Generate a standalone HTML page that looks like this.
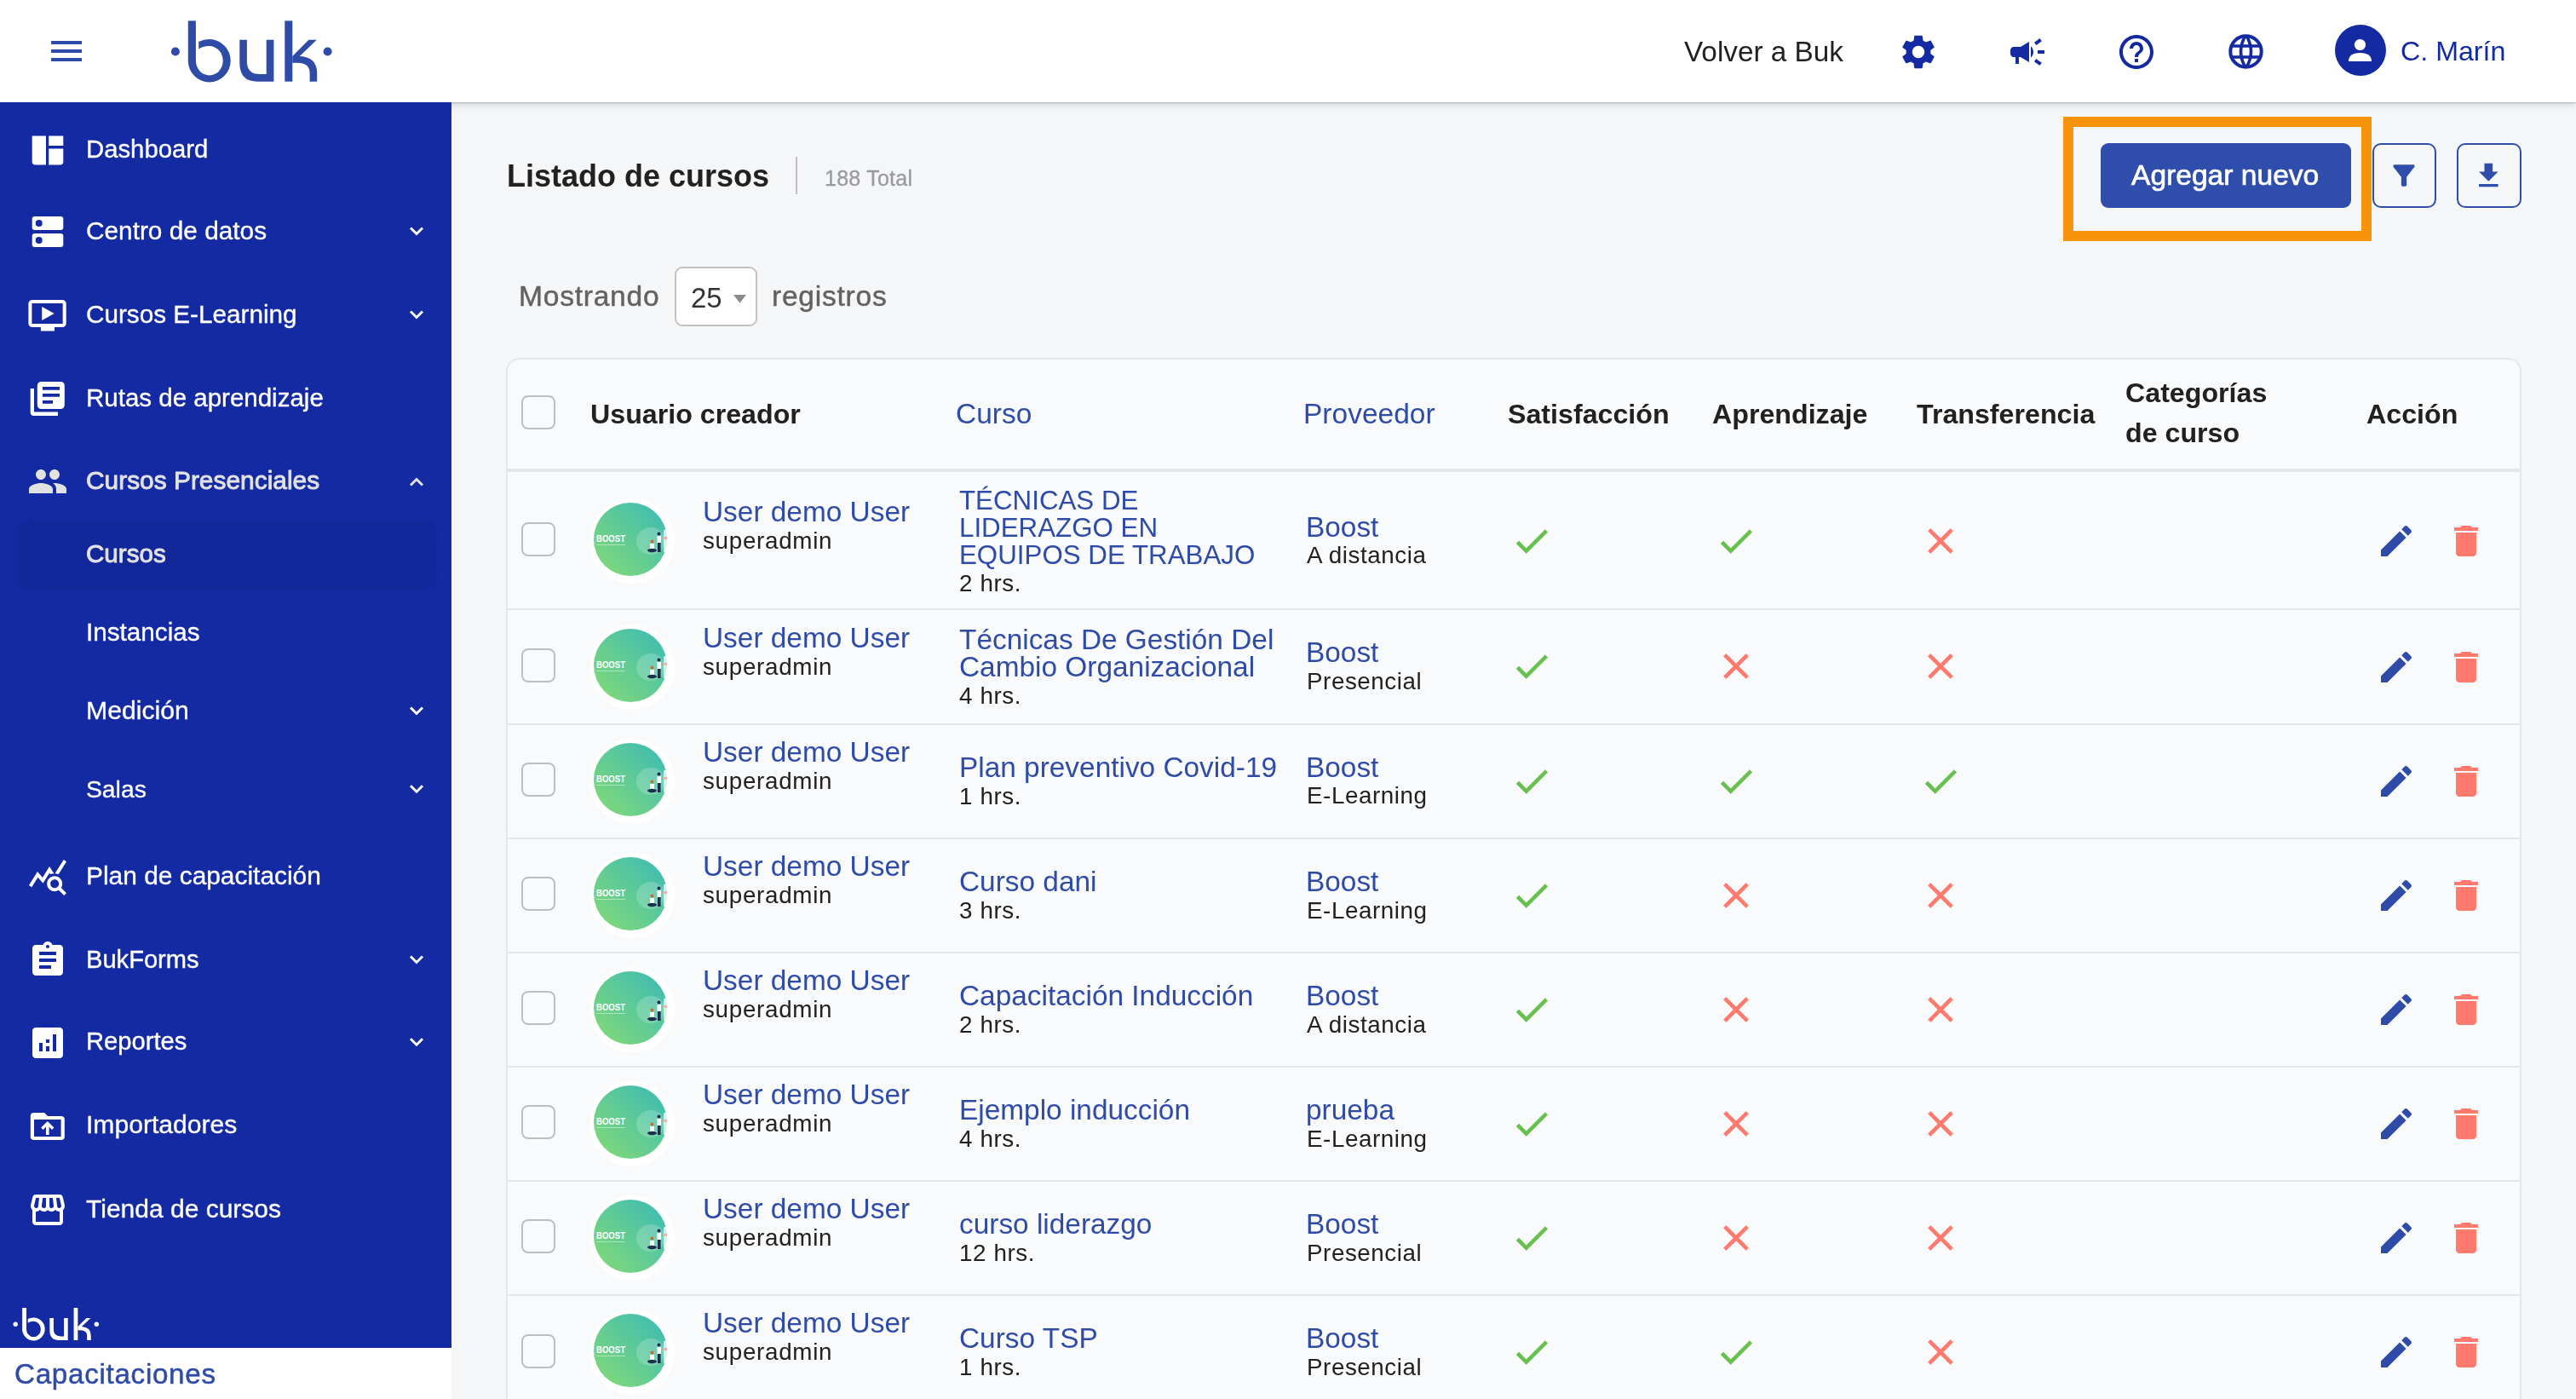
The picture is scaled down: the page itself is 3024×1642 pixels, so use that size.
<!DOCTYPE html><html><head><meta charset="utf-8"><title>Listado de cursos</title><style>
html,body{margin:0;padding:0;}
body{width:3024px;height:1642px;position:relative;overflow:hidden;background:#f5f6f8;font-family:"Liberation Sans",sans-serif;}
.t{position:absolute;white-space:nowrap;will-change:transform;}
.ic{position:absolute;overflow:visible;}
.abs{position:absolute;}
</style></head><body>
<div class="abs" style="left:0;top:0;width:3024px;height:120px;background:#fff;box-shadow:0 1px 2px rgba(0,0,0,0.22),0 3px 10px rgba(0,0,0,0.13);z-index:2"></div>
<div class="abs" style="left:60px;top:48px;width:36px;height:3.6px;background:#2f4ba8;z-index:3"></div>
<div class="abs" style="left:60px;top:58px;width:36px;height:3.6px;background:#2f4ba8;z-index:3"></div>
<div class="abs" style="left:60px;top:68px;width:36px;height:3.6px;background:#2f4ba8;z-index:3"></div>
<svg class="ic" style="left:0.00px;top:0.00px;z-index:3" width="3024" height="120" viewBox="0 0 3024 120"><g fill="#2f4ba8"><circle cx="205.9" cy="60.5" r="5.05"/><circle cx="384.6" cy="60.5" r="5.05"/><rect x="220.8" y="24.4" width="9.1" height="48.5"/><path d="M233.2 48.9 Q239 46 245.75 46 A24.95 25.25 0 0 1 270.7 71.25 A24.95 25.25 0 0 1 245.75 96.5 A24.95 25.25 0 0 1 220.8 71.25 L229.9 71.25 A15.9 17.15 0 0 0 245.8 88.4 A15.9 17.15 0 0 0 261.7 71.25 A15.9 17.15 0 0 0 245.8 54.1 Q238 54.1 233.2 57.6 Z"/><path d="M281.3 46.8 H289.9 V72 Q289.9 87.1 305 87.1 H312.7 V46.8 H321.4 V95.7 H302 Q281.3 95.7 281.3 74 Z"/><rect x="334.3" y="24.4" width="9" height="71.3"/><path d="M343.3 65.9 H351.8 L371.8 46.8 H362.4 Z"/><path d="M343.3 65.9 H352 Q372.2 67 372.2 86 V95.7 H363.6 V86 Q363.6 73.7 349 73.7 H343.3 Z"/></g></svg>
<div style="position:absolute;left:0;top:0;z-index:4">
<div class="t" style="left:1977.00px;top:44.31px;font-size:33.3px;line-height:33.3px;color:#212121;font-weight:400;">Volver a Buk</div>
<svg class="ic" style="left:2228.00px;top:36.75px;" width="48" height="48" viewBox="0 0 24 24"><path d="M19.14 12.94c.04-.3.06-.61.06-.94 0-.32-.02-.64-.07-.94l2.03-1.58c.18-.14.23-.41.12-.61l-1.92-3.32c-.12-.22-.37-.29-.59-.22l-2.39.96c-.5-.38-1.03-.7-1.62-.94l-.36-2.54c-.04-.24-.24-.41-.48-.41h-3.84c-.24 0-.43.17-.47.41l-.36 2.54c-.59.24-1.13.57-1.62.94l-2.39-.96c-.22-.08-.47 0-.59.22L2.74 8.87c-.12.21-.08.47.12.61l2.03 1.58c-.05.3-.09.63-.09.94s.02.64.07.94l-2.03 1.58c-.18.14-.23.41-.12.61l1.92 3.32c.12.22.37.29.59.22l2.39-.96c.5.38 1.030.7 1.62.94l.36 2.54c.05.24.24.41.48.41h3.84c.24 0 .44-.17.47-.41l.36-2.54c.59-.24 1.13-.56 1.62-.94l2.39.96c.22.08.47 0 .59-.22l1.92-3.32c.12-.22.07-.47-.12-.61l-2.01-1.58zM12 15.6c-1.98 0-3.6-1.62-3.6-3.6s1.62-3.6 3.6-3.6 3.6 1.62 3.6 3.6-1.62 3.6-3.6 3.6z" fill="#132aa3" /></svg>
<svg class="ic" style="left:2356.40px;top:37.00px;" width="48" height="48" viewBox="0 0 24 24"><path d="M18 11v2h4v-2h-4zm-2 6.61c.96.71 2.21 1.65 3.2 2.39.4-.53.8-1.07 1.2-1.6-.99-.74-2.24-1.68-3.2-2.4-.4.54-.8 1.08-1.2 1.61zM20.4 5.6c-.4-.53-.8-1.07-1.2-1.6-.99.74-2.24 1.68-3.2 2.4.4.53.8 1.07 1.2 1.6.96-.72 2.21-1.65 3.2-2.4zM4 9c-1.1 0-2 .9-2 2v2c0 1.1.9 2 2 2h1v4h2v-4h1l5 3V6L8 9H4zm11.5 3c0-1.33-.58-2.530-1.5-3.35v6.69c.92-.81 1.5-2.01 1.5-3.34z" fill="#132aa3" /></svg>
<svg class="ic" style="left:2484.25px;top:36.75px;" width="48" height="48" viewBox="0 0 24 24"><path d="M11 18h2v-2h-2v2zm1-16C6.48 2 2 6.48 2 12s4.48 10 10 10 10-4.48 10-10S17.52 2 12 2zm0 18c-4.41 0-8-3.59-8-8s3.59-8 8-8 8 3.59 8 8-3.59 8-8 8zm0-14c-2.21 0-4 1.79-4 4h2c0-1.1.9-2 2-2s2 .9 2 2c0 2-3 1.75-3 5h2c0-2.25 3-2.5 3-5 0-2.21-1.79-4-4-4z" fill="#132aa3" /></svg>
<svg class="ic" style="left:2616.00px;top:39.50px;" width="41" height="41" viewBox="0 0 41 41"><g fill="none" stroke="#132aa3" stroke-width="4"><circle cx="20.5" cy="20.5" r="18.2"/><clipPath id="gl"><circle cx="20.5" cy="20.5" r="18"/></clipPath><g clip-path="url(#gl)" stroke-width="3.6"><path d="M20.5 1 Q8.5 20.5 20.5 40 Q32.5 20.5 20.5 1"/><path d="M1 14 H40 M1 27 H40"/></g></g></svg>
<svg class="ic" style="left:2741.20px;top:28.80px;" width="60" height="60" viewBox="0 0 60 60"><circle cx="30" cy="30" r="30" fill="#132aa3"/><circle cx="29.5" cy="23.5" r="6.6" fill="#fff"/><path d="M16 43 Q16 33 29.5 33 Q43 33 43 43 Z" fill="#fff"/></svg>
<div class="t" style="left:2818.40px;top:43.94px;font-size:32.2px;line-height:32.2px;color:#132aa3;font-weight:400;">C. Marín</div>
</div>
<div class="abs" style="left:0;top:120px;width:530px;height:1462px;background:#132aa3;z-index:3"></div>
<div class="abs" style="left:0;top:1582px;width:530px;height:60px;background:#fff;z-index:3"></div>
<div class="abs" style="left:20px;top:610px;width:493.25px;height:83px;border-radius:16px;background:#11279a;z-index:3"></div>
<div style="position:absolute;left:0;top:0;z-index:4">
<div class="t" style="left:100.75px;top:159.90px;font-size:29.3px;line-height:29.3px;color:#ffffff;font-weight:400;-webkit-text-stroke:0.35px #ffffff;">Dashboard</div>
<div class="t" style="left:100.75px;top:255.97px;font-size:29.8px;line-height:29.8px;color:#ffffff;font-weight:400;-webkit-text-stroke:0.35px #ffffff;">Centro de datos</div>
<svg class="ic" style="left:0.00px;top:0.00px;" width="530" height="1642" viewBox="0 0 530 1642"><path d="M482 267.5 L489 274.5 L496 267.5" fill="none" stroke="#fff" stroke-width="3"/></svg>
<div class="t" style="left:100.75px;top:354.06px;font-size:29.7px;line-height:29.7px;color:#ffffff;font-weight:400;-webkit-text-stroke:0.35px #ffffff;">Cursos E-Learning</div>
<svg class="ic" style="left:0.00px;top:0.00px;" width="530" height="1642" viewBox="0 0 530 1642"><path d="M482 365.5 L489 372.5 L496 365.5" fill="none" stroke="#fff" stroke-width="3"/></svg>
<div class="t" style="left:100.75px;top:452.23px;font-size:29.5px;line-height:29.5px;color:#ffffff;font-weight:400;-webkit-text-stroke:0.35px #ffffff;">Rutas de aprendizaje</div>
<div class="t" style="left:100.75px;top:548.89px;font-size:29.9px;line-height:29.9px;color:#e2e2e2;font-weight:400;-webkit-text-stroke:0.9px #e2e2e2;">Cursos Presenciales</div>
<svg class="ic" style="left:0.00px;top:0.00px;" width="530" height="1642" viewBox="0 0 530 1642"><path d="M482 569.5 L489 562.5 L496 569.5" fill="none" stroke="#e2e2e2" stroke-width="3"/></svg>
<div class="t" style="left:100.75px;top:635.39px;font-size:29.6px;line-height:29.6px;color:#e2e2e2;font-weight:400;-webkit-text-stroke:0.9px #e2e2e2;">Cursos</div>
<div class="t" style="left:100.75px;top:726.56px;font-size:29.7px;line-height:29.7px;color:#ffffff;font-weight:400;-webkit-text-stroke:0.35px #ffffff;">Instancias</div>
<div class="t" style="left:100.75px;top:818.64px;font-size:30.2px;line-height:30.2px;color:#ffffff;font-weight:400;-webkit-text-stroke:0.35px #ffffff;">Medición</div>
<svg class="ic" style="left:0.00px;top:0.00px;" width="530" height="1642" viewBox="0 0 530 1642"><path d="M482 830.5 L489 837.5 L496 830.5" fill="none" stroke="#fff" stroke-width="3"/></svg>
<div class="t" style="left:100.75px;top:911.99px;font-size:28.3px;line-height:28.3px;color:#ffffff;font-weight:400;-webkit-text-stroke:0.35px #ffffff;">Salas</div>
<svg class="ic" style="left:0.00px;top:0.00px;" width="530" height="1642" viewBox="0 0 530 1642"><path d="M482 922.25 L489 929.25 L496 922.25" fill="none" stroke="#fff" stroke-width="3"/></svg>
<div class="t" style="left:100.75px;top:1012.64px;font-size:29.9px;line-height:29.9px;color:#ffffff;font-weight:400;-webkit-text-stroke:0.35px #ffffff;">Plan de capacitación</div>
<div class="t" style="left:100.75px;top:1111.57px;font-size:29.1px;line-height:29.1px;color:#ffffff;font-weight:400;-webkit-text-stroke:0.35px #ffffff;">BukForms</div>
<svg class="ic" style="left:0.00px;top:0.00px;" width="530" height="1642" viewBox="0 0 530 1642"><path d="M482 1122.5 L489 1129.5 L496 1122.5" fill="none" stroke="#fff" stroke-width="3"/></svg>
<div class="t" style="left:100.75px;top:1208.23px;font-size:29.2px;line-height:29.2px;color:#ffffff;font-weight:400;-webkit-text-stroke:0.35px #ffffff;">Reportes</div>
<svg class="ic" style="left:0.00px;top:0.00px;" width="530" height="1642" viewBox="0 0 530 1642"><path d="M482 1219.25 L489 1226.25 L496 1219.25" fill="none" stroke="#fff" stroke-width="3"/></svg>
<div class="t" style="left:100.75px;top:1304.97px;font-size:30.1px;line-height:30.1px;color:#ffffff;font-weight:400;-webkit-text-stroke:0.35px #ffffff;">Importadores</div>
<div class="t" style="left:100.75px;top:1403.81px;font-size:30.0px;line-height:30.0px;color:#ffffff;font-weight:400;-webkit-text-stroke:0.35px #ffffff;">Tienda de cursos</div>
<svg class="ic" style="left:0.00px;top:0.00px;" width="530" height="1642" viewBox="0 0 530 1642"><g fill="#ffffff"><path d="M37.7 159.5 H54 V193.4 H41.7 Q37.7 193.4 37.7 189.4 Z"/><rect x="57.2" y="159.5" width="17.1" height="11.5"/><path d="M57.2 174.4 H74.3 V189.4 Q74.3 193.4 70.3 193.4 H57.2 Z"/><path fill-rule="evenodd" d="M40.7 254 H71.3 Q74.3 254 74.3 257 V267 Q74.3 270 71.3 270 H40.7 Q37.7 270 37.7 267 V257 Q37.7 254 40.7 254 Z M45.7 258 A4 4 0 1 0 45.7 266 A4 4 0 1 0 45.7 258 Z"/><path fill-rule="evenodd" d="M40.7 274 H71.3 Q74.3 274 74.3 277 V287 Q74.3 290 71.3 290 H40.7 Q37.7 290 37.7 287 V277 Q37.7 274 40.7 274 Z M45.7 278 A4 4 0 1 0 45.7 286 A4 4 0 1 0 45.7 278 Z"/><rect x="35.4" y="354" width="40.3" height="28" rx="2.5" fill="none" stroke="#ffffff" stroke-width="4"/><rect x="47.9" y="384" width="16.1" height="4.5"/><path d="M49.2 360 L63.7 368 L49.2 376 Z"/><path fill-rule="evenodd" d="M48.8 448 H70.8 Q75.8 448 75.8 453 V475 Q75.8 480 70.8 480 H48.8 Q43.8 480 43.8 475 V453 Q43.8 448 48.8 448 Z M50 454 V457.7 H70 V454 Z M50 462 V465.7 H70 V462 Z M50 470 V473.8 H62 V470 Z"/><path d="M35.7 456 H40 V483.4 H68 V488 H39.7 Q35.7 488 35.7 484 Z"/></g></svg>
<svg class="ic" style="left:31.75px;top:541.00px;" width="48" height="48" viewBox="0 0 24 24"><path d="M16 11c1.66 0 2.99-1.34 2.99-3S17.66 5 16 5c-1.66 0-3 1.34-3 3s1.34 3 3 3zm-8 0c1.66 0 2.99-1.34 2.99-3S9.66 5 8 5C6.34 5 5 6.34 5 8s1.34 3 3 3zm0 2c-2.33 0-7 1.17-7 3.5V19h14v-2.5c0-2.33-4.67-3.5-7-3.5zm8 0c-.29 0-.62.02-.97.05 1.16.84 1.97 1.97 1.97 3.45V19h6v-2.5c0-2.33-4.67-3.5-7-3.5z" fill="#e2e2e2" /></svg>
<svg class="ic" style="left:32.00px;top:1005.00px;" width="48" height="48" viewBox="0 0 24 24"><path d="M19.88 18.47c.44-.7.7-1.51.7-2.39 0-2.49-2.01-4.5-4.5-4.5s-4.5 2.01-4.5 4.5 2.01 4.5 4.49 4.5c.88 0 1.7-.26 2.39-.7L21.58 23 23 21.58l-3.12-3.11zm-3.8.11c-1.38 0-2.5-1.12-2.5-2.5s1.12-2.5 2.5-2.5 2.5 1.12 2.5 2.5-1.12 2.5-2.5 2.5zm-.36-8.5c-.74.02-1.45.18-2.1.45l-.55-.83-3.8 6.18-3.01-3.52-3.63 5.81L1 17l5-8 3 3.5L13 6l2.72 4.08zm2.59.5c-.64-.28-1.33-.45-2.05-.49L21.38 2 23 3.18l-4.69 7.4z" fill="#ffffff" /></svg>
<svg class="ic" style="left:31.70px;top:1102.90px;" width="48" height="48" viewBox="0 0 24 24"><path d="M19 3h-4.18C14.4 1.84 13.3 1 12 1c-1.3 0-2.4.84-2.82 2H5c-1.1 0-2 .9-2 2v14c0 1.1.9 2 2 2h14c1.1 0 2-.9 2-2V5c0-1.1-.9-2-2-2zm-7 0c.55 0 1 .45 1 1s-.45 1-1 1-1-.45-1-1 .45-1 1-1zm2 14H7v-2h7v2zm3-4H7v-2h10v2zm0-4H7V7h10v2z" fill="#ffffff" /></svg>
<svg class="ic" style="left:31.70px;top:1199.90px;" width="48" height="48" viewBox="0 0 24 24"><path d="M19 3H5c-1.1 0-2 .9-2 2v14c0 1.1.9 2 2 2h14c1.1 0 2-.9 2-2V5c0-1.1-.9-2-2-2zM9 17H7v-5h2v5zm4 0h-2v-3h2v3zm0-5h-2v-2h2v2zm4 5h-2V7h2v10z" fill="#ffffff" /></svg>
<svg class="ic" style="left:0.00px;top:0.00px;" width="530" height="1642" viewBox="0 0 530 1642"><g fill="#ffffff"><path fill-rule="evenodd" d="M39.8 1306 H52 L56 1310 H71.8 Q75.8 1310 75.8 1314 V1334 Q75.8 1338 71.8 1338 H39.8 Q35.8 1338 35.8 1334 V1310 Q35.8 1306 39.8 1306 Z M40 1314 V1334 H71.6 V1314 Z"/><path d="M55.8 1316 L63.4 1323.6 L61 1326 L57.6 1322.6 V1332 H54 V1322.6 L50.6 1326 L48.2 1323.6 Z"/></g></svg>
<svg class="ic" style="left:31.90px;top:1396.00px;" width="48" height="48" viewBox="0 0 24 24"><path d="M21.9 8.89l-1.05-4.37c-.22-.9-1-1.52-1.91-1.52H5.05c-.9 0-1.69.63-1.9 1.52L2.1 8.89c-.24 1.02-.02 2.06.62 2.88.08.11.19.19.28.29V19c0 1.1.9 2 2 2h14c1.1 0 2-.9 2-2v-6.94c.09-.09.2-.18.28-.28.64-.82.87-1.870.62-2.89zm-2.99-3.9l1.05 4.37c.1.42.01.84-.25 1.17-.14.18-.44.47-.94.47-.61 0-1.14-.49-1.21-1.14L16.98 5l1.93-.01zM13 5h1.96l.54 4.52c.05.39-.07.78-.33 1.07-.22.26-.54.41-.95.41-.67 0-1.22-.59-1.22-1.31V5zM8.49 9.52L9.04 5H11v4.69c0 .72-.55 1.31-1.29 1.31-.34 0-.65-.15-.89-.41-.25-.29-.37-.68-.33-1.07zm-4.45-.16L5.05 5h1.97l-.58 4.86c-.08.65-.6 1.14-1.21 1.14-.49 0-.8-.29-.93-.47-.27-.32-.36-.75-.26-1.17zM5 19v-6.03c.08.01.15.03.23.03.87 0 1.66-.36 2.24-.95.6.6 1.4.95 2.31.95.87 0 1.65-.36 2.230-.93.59.57 1.39.93 2.29.93.84 0 1.64-.35 2.24-.95.58.59 1.37.95 2.24.95.08 0 .15-.02.23-.03V19H5z" fill="#ffffff" /></svg>
<svg class="ic" style="left:0.00px;top:0.00px;" width="530" height="1642" viewBox="0 0 530 1642"><g transform="translate(15.5 1535) scale(0.5325) translate(-200.85 -24.4)"><g fill="#ffffff"><circle cx="205.9" cy="60.5" r="5.05"/><circle cx="384.6" cy="60.5" r="5.05"/><rect x="220.8" y="24.4" width="9.1" height="48.5"/><path d="M233.2 48.9 Q239 46 245.75 46 A24.95 25.25 0 0 1 270.7 71.25 A24.95 25.25 0 0 1 245.75 96.5 A24.95 25.25 0 0 1 220.8 71.25 L229.9 71.25 A15.9 17.15 0 0 0 245.8 88.4 A15.9 17.15 0 0 0 261.7 71.25 A15.9 17.15 0 0 0 245.8 54.1 Q238 54.1 233.2 57.6 Z"/><path d="M281.3 46.8 H289.9 V72 Q289.9 87.1 305 87.1 H312.7 V46.8 H321.4 V95.7 H302 Q281.3 95.7 281.3 74 Z"/><rect x="334.3" y="24.4" width="9" height="71.3"/><path d="M343.3 65.9 H351.8 L371.8 46.8 H362.4 Z"/><path d="M343.3 65.9 H352 Q372.2 67 372.2 86 V95.7 H363.6 V86 Q363.6 73.7 349 73.7 H343.3 Z"/></g></g></svg>
<div class="t" style="left:17.00px;top:1595.90px;font-size:33.2px;line-height:33.2px;color:#2f4ba8;font-weight:400;letter-spacing:0.7px;-webkit-text-stroke:0.5px #2f4ba8;">Capacitaciones</div>
</div>
<div style="position:absolute;left:0;top:0;z-index:1">
<div class="t" style="left:595.00px;top:188.53px;font-size:36px;line-height:36px;color:#212121;font-weight:700;">Listado de cursos</div>
<div class="abs" style="left:934px;top:184px;width:2px;height:43.5px;background:#bfbfc1"></div>
<div class="t" style="left:968.00px;top:197.00px;font-size:25.1px;line-height:25.1px;color:#999a9c;font-weight:400;-webkit-text-stroke:0.3px #999a9c;letter-spacing:0.2px;">188 Total</div>
<div class="abs" style="left:2421.75px;top:136.75px;width:362px;height:145.75px;box-sizing:border-box;border:12px solid #f8940a"></div>
<div class="abs" style="left:2466px;top:168px;width:294px;height:75.75px;border-radius:9px;background:#2f4dab"></div>
<div class="t" style="left:2501.75px;top:188.56px;font-size:33.6px;line-height:33.6px;color:#ffffff;font-weight:400;-webkit-text-stroke:0.7px #ffffff;">Agregar nuevo</div>
<div class="abs" style="left:2784.5px;top:168px;width:75px;height:75.75px;box-sizing:border-box;border:2px solid #2f4dab;border-radius:10px"></div>
<svg class="ic" style="left:2802.90px;top:186.90px;" width="38" height="38" viewBox="0 0 24 24"><path d="M4.25 5.61C6.27 8.2 10 13 10 13v6c0 .55.45 1 1 1h2c.55 0 1-.45 1-1v-6s3.72-4.8 5.74-7.39c.51-.66.04-1.61-.79-1.61H5.04c-.83 0-1.3.95-.79 1.61z" fill="#2f4dab" /></svg>
<div class="abs" style="left:2884px;top:168px;width:75.5px;height:75.75px;box-sizing:border-box;border:2px solid #2f4dab;border-radius:10px"></div>
<svg class="ic" style="left:2902.45px;top:186.90px;" width="38.6" height="38.6" viewBox="0 0 24 24"><path d="M19 9h-4V3H9v6H5l7 7 7-7zM5 18v2h14v-2H5z" fill="#2f4dab" /></svg>
<div class="t" style="left:609.00px;top:330.81px;font-size:33.6px;line-height:33.6px;color:#626262;font-weight:400;-webkit-text-stroke:0.45px #626262;letter-spacing:0.75px;">Mostrando</div>
<div class="abs" style="left:791.75px;top:312.5px;width:97.5px;height:70.5px;box-sizing:border-box;border:2px solid #c2c2c2;border-radius:9px;background:#fff"></div>
<div class="t" style="left:811.25px;top:332.82px;font-size:33px;line-height:33px;color:#333333;font-weight:400;">25</div>
<svg class="ic" style="left:860.75px;top:346.25px;" width="15" height="9.5" viewBox="0 0 15 9.5"><path d="M0 0 H15 L7.5 9.5 Z" fill="#8a8a8a"/></svg>
<div class="t" style="left:905.50px;top:330.81px;font-size:33.6px;line-height:33.6px;color:#626262;font-weight:400;-webkit-text-stroke:0.45px #626262;letter-spacing:0.75px;">registros</div>
<div class="abs" style="left:594px;top:420px;width:2365.5px;height:1300px;box-sizing:border-box;border:2px solid #e4e6ea;border-radius:16px;background:#f9fafb"></div>
<div class="abs" style="left:612px;top:464px;width:40px;height:40px;box-sizing:border-box;border:2px solid #bdbec0;border-radius:8px;background:transparent"></div>
<div class="t" style="left:693.00px;top:469.64px;font-size:32.2px;line-height:32.2px;color:#212121;font-weight:700;">Usuario creador</div>
<div class="t" style="left:1122.00px;top:468.54px;font-size:33.5px;line-height:33.5px;color:#2f4ba8;font-weight:400;">Curso</div>
<div class="t" style="left:1529.50px;top:468.54px;font-size:33.5px;line-height:33.5px;color:#2f4ba8;font-weight:400;">Proveedor</div>
<div class="t" style="left:1769.50px;top:469.64px;font-size:32.2px;line-height:32.2px;color:#212121;font-weight:700;">Satisfacción</div>
<div class="t" style="left:2009.50px;top:469.64px;font-size:32.2px;line-height:32.2px;color:#212121;font-weight:700;">Aprendizaje</div>
<div class="t" style="left:2249.50px;top:469.64px;font-size:32.2px;line-height:32.2px;color:#212121;font-weight:700;">Transferencia</div>
<div class="t" style="left:2495.00px;top:444.64px;font-size:32.2px;line-height:32.2px;color:#212121;font-weight:700;">Categorías</div>
<div class="t" style="left:2495.00px;top:492.14px;font-size:32.2px;line-height:32.2px;color:#212121;font-weight:700;">de curso</div>
<div class="t" style="left:2777.50px;top:469.64px;font-size:32.2px;line-height:32.2px;color:#212121;font-weight:700;">Acción</div>
<div class="abs" style="left:596px;top:550px;width:2361.5px;height:4px;background:#e4e6ea"></div>
<div class="abs" style="left:596px;top:714px;width:2361.5px;height:2px;background:#e4e6ea"></div>
<div class="abs" style="left:612px;top:613.20px;width:40px;height:40px;box-sizing:border-box;border:2px solid #bdbec0;border-radius:8px;background:transparent"></div>
<svg class="ic" style="left:692.00px;top:585.00px;" width="100" height="100" viewBox="0 0 100 100"><defs><linearGradient id="g0" x1="0.1" y1="0.9" x2="0.9" y2="0.1"><stop offset="0" stop-color="#7ed87b"/><stop offset="1" stop-color="#41bdb0"/></linearGradient><clipPath id="c0"><rect x="0" y="0" width="91" height="100"/></clipPath></defs><circle cx="50" cy="50" r="50" fill="#ffffff"/><g clip-path="url(#c0)"><circle cx="48" cy="48" r="43" fill="url(#g0)"/><ellipse cx="72" cy="50" rx="17" ry="16" fill="#ffffff" fill-opacity="0.2"/><rect x="87" y="37" width="5" height="26" fill="#ffffff" fill-opacity="0.75"/><rect x="86" y="45" width="6" height="3" fill="#f5a3a3" fill-opacity="0.8"/><circle cx="81.5" cy="41.5" r="2" fill="#1d2f4f"/><rect x="79.5" y="44" width="4.5" height="8" fill="#ffffff"/><rect x="80" y="52" width="3.6" height="11" fill="#1d2f4f"/><circle cx="73.5" cy="50.5" r="2" fill="#b8733c"/><rect x="71" y="53" width="5" height="6" fill="#ffffff"/><ellipse cx="73.5" cy="61" rx="5.5" ry="2.2" fill="#1d2f4f"/><text x="8" y="51" font-family="Liberation Sans" font-weight="700" font-size="10.5" textLength="34" lengthAdjust="spacingAndGlyphs" fill="#fff">BOOST</text><rect x="8" y="54" width="34" height="0.8" fill="#ffffff" fill-opacity="0.55"/></g></svg>
<div class="t" style="left:825.00px;top:584.03px;font-size:33.4px;line-height:33.4px;color:#2f4ba8;font-weight:400;">User demo User</div>
<div class="t" style="left:825.00px;top:620.77px;font-size:27.8px;line-height:27.8px;color:#212121;font-weight:400;letter-spacing:0.7px;">superadmin</div>
<div class="t" style="left:1125.50px;top:571.60px;font-size:31.3px;line-height:31.3px;color:#2f4ba8;font-weight:400;">TÉCNICAS DE</div>
<div class="t" style="left:1125.50px;top:603.60px;font-size:31.3px;line-height:31.3px;color:#2f4ba8;font-weight:400;">LIDERAZGO EN</div>
<div class="t" style="left:1125.50px;top:635.60px;font-size:31.3px;line-height:31.3px;color:#2f4ba8;font-weight:400;">EQUIPOS DE TRABAJO</div>
<div class="t" style="left:1125.50px;top:670.87px;font-size:27.8px;line-height:27.8px;color:#212121;font-weight:400;letter-spacing:0.6px;">2 hrs.</div>
<div class="t" style="left:1533.00px;top:601.73px;font-size:33.4px;line-height:33.4px;color:#2f4ba8;font-weight:400;">Boost</div>
<div class="t" style="left:1534.00px;top:638.27px;font-size:27.8px;line-height:27.8px;color:#212121;font-weight:400;letter-spacing:0.55px;">A distancia</div>
<svg class="ic" style="left:1772.93px;top:609.68px;" width="50" height="50" viewBox="0 0 24 24"><path d="M9 16.17L4.83 12l-1.42 1.41L9 19 21 7l-1.41-1.41z" fill="#67c04e" stroke="#67c04e" stroke-width="0.3"/></svg>
<svg class="ic" style="left:2012.73px;top:609.68px;" width="50" height="50" viewBox="0 0 24 24"><path d="M9 16.17L4.83 12l-1.42 1.41L9 19 21 7l-1.41-1.41z" fill="#67c04e" stroke="#67c04e" stroke-width="0.3"/></svg>
<svg class="ic" style="left:2253.00px;top:609.70px;" width="50" height="50" viewBox="0 0 24 24"><path d="M19 6.41L17.59 5 12 10.59 6.41 5 5 6.41 10.59 12 5 17.59 6.41 19 12 13.41 17.59 19 19 17.59 13.41 12z" fill="#ff7a6d" stroke="#ff7a6d" stroke-width="0.3"/></svg>
<svg class="ic" style="left:2788.90px;top:610.90px;" width="48" height="48" viewBox="0 0 24 24"><path d="M3 17.25V21h3.75L17.81 9.94l-3.75-3.75L3 17.25zM20.71 7.04c.39-.39.39-1.02 0-1.41l-2.34-2.34c-.39-.39-1.02-.39-1.41 0l-1.83 1.83 3.75 3.75 1.83-1.83z" fill="#2f4ba8" /></svg>
<svg class="ic" style="left:2871.00px;top:610.90px;" width="48" height="48" viewBox="0 0 24 24"><path d="M6 19c0 1.1.9 2 2 2h8c1.1 0 2-.9 2-2V7H6v12zM19 4h-3.5l-1-1h-5l-1 1H5v2h14V4z" fill="#ff7a6d" /></svg>
<div class="abs" style="left:596px;top:848.5px;width:2361.5px;height:2px;background:#e4e6ea"></div>
<div class="abs" style="left:612px;top:760.95px;width:40px;height:40px;box-sizing:border-box;border:2px solid #bdbec0;border-radius:8px;background:transparent"></div>
<svg class="ic" style="left:692.00px;top:732.75px;" width="100" height="100" viewBox="0 0 100 100"><defs><linearGradient id="g1" x1="0.1" y1="0.9" x2="0.9" y2="0.1"><stop offset="0" stop-color="#7ed87b"/><stop offset="1" stop-color="#41bdb0"/></linearGradient><clipPath id="c1"><rect x="0" y="0" width="91" height="100"/></clipPath></defs><circle cx="50" cy="50" r="50" fill="#ffffff"/><g clip-path="url(#c1)"><circle cx="48" cy="48" r="43" fill="url(#g1)"/><ellipse cx="72" cy="50" rx="17" ry="16" fill="#ffffff" fill-opacity="0.2"/><rect x="87" y="37" width="5" height="26" fill="#ffffff" fill-opacity="0.75"/><rect x="86" y="45" width="6" height="3" fill="#f5a3a3" fill-opacity="0.8"/><circle cx="81.5" cy="41.5" r="2" fill="#1d2f4f"/><rect x="79.5" y="44" width="4.5" height="8" fill="#ffffff"/><rect x="80" y="52" width="3.6" height="11" fill="#1d2f4f"/><circle cx="73.5" cy="50.5" r="2" fill="#b8733c"/><rect x="71" y="53" width="5" height="6" fill="#ffffff"/><ellipse cx="73.5" cy="61" rx="5.5" ry="2.2" fill="#1d2f4f"/><text x="8" y="51" font-family="Liberation Sans" font-weight="700" font-size="10.5" textLength="34" lengthAdjust="spacingAndGlyphs" fill="#fff">BOOST</text><rect x="8" y="54" width="34" height="0.8" fill="#ffffff" fill-opacity="0.55"/></g></svg>
<div class="t" style="left:825.00px;top:731.78px;font-size:33.4px;line-height:33.4px;color:#2f4ba8;font-weight:400;">User demo User</div>
<div class="t" style="left:825.00px;top:768.52px;font-size:27.8px;line-height:27.8px;color:#212121;font-weight:400;letter-spacing:0.7px;">superadmin</div>
<div class="t" style="left:1125.50px;top:733.58px;font-size:33.4px;line-height:33.4px;color:#2f4ba8;font-weight:400;">Técnicas De Gestión Del</div>
<div class="t" style="left:1125.50px;top:765.58px;font-size:33.4px;line-height:33.4px;color:#2f4ba8;font-weight:400;">Cambio Organizacional</div>
<div class="t" style="left:1125.50px;top:802.62px;font-size:27.8px;line-height:27.8px;color:#212121;font-weight:400;letter-spacing:0.6px;">4 hrs.</div>
<div class="t" style="left:1533.00px;top:749.48px;font-size:33.4px;line-height:33.4px;color:#2f4ba8;font-weight:400;">Boost</div>
<div class="t" style="left:1534.00px;top:786.02px;font-size:27.8px;line-height:27.8px;color:#212121;font-weight:400;letter-spacing:0.55px;">Presencial</div>
<svg class="ic" style="left:1772.93px;top:757.43px;" width="50" height="50" viewBox="0 0 24 24"><path d="M9 16.17L4.83 12l-1.42 1.41L9 19 21 7l-1.41-1.41z" fill="#67c04e" stroke="#67c04e" stroke-width="0.3"/></svg>
<svg class="ic" style="left:2013.15px;top:757.45px;" width="50" height="50" viewBox="0 0 24 24"><path d="M19 6.41L17.59 5 12 10.59 6.41 5 5 6.41 10.59 12 5 17.59 6.41 19 12 13.41 17.59 19 19 17.59 13.41 12z" fill="#ff7a6d" stroke="#ff7a6d" stroke-width="0.3"/></svg>
<svg class="ic" style="left:2253.00px;top:757.45px;" width="50" height="50" viewBox="0 0 24 24"><path d="M19 6.41L17.59 5 12 10.59 6.41 5 5 6.41 10.59 12 5 17.59 6.41 19 12 13.41 17.59 19 19 17.59 13.41 12z" fill="#ff7a6d" stroke="#ff7a6d" stroke-width="0.3"/></svg>
<svg class="ic" style="left:2788.90px;top:758.65px;" width="48" height="48" viewBox="0 0 24 24"><path d="M3 17.25V21h3.75L17.81 9.94l-3.75-3.75L3 17.25zM20.71 7.04c.39-.39.39-1.02 0-1.41l-2.34-2.34c-.39-.39-1.02-.39-1.41 0l-1.83 1.83 3.75 3.75 1.83-1.83z" fill="#2f4ba8" /></svg>
<svg class="ic" style="left:2871.00px;top:758.65px;" width="48" height="48" viewBox="0 0 24 24"><path d="M6 19c0 1.1.9 2 2 2h8c1.1 0 2-.9 2-2V7H6v12zM19 4h-3.5l-1-1h-5l-1 1H5v2h14V4z" fill="#ff7a6d" /></svg>
<div class="abs" style="left:596px;top:982.75px;width:2361.5px;height:2px;background:#e4e6ea"></div>
<div class="abs" style="left:612px;top:895.33px;width:40px;height:40px;box-sizing:border-box;border:2px solid #bdbec0;border-radius:8px;background:transparent"></div>
<svg class="ic" style="left:692.00px;top:867.12px;" width="100" height="100" viewBox="0 0 100 100"><defs><linearGradient id="g2" x1="0.1" y1="0.9" x2="0.9" y2="0.1"><stop offset="0" stop-color="#7ed87b"/><stop offset="1" stop-color="#41bdb0"/></linearGradient><clipPath id="c2"><rect x="0" y="0" width="91" height="100"/></clipPath></defs><circle cx="50" cy="50" r="50" fill="#ffffff"/><g clip-path="url(#c2)"><circle cx="48" cy="48" r="43" fill="url(#g2)"/><ellipse cx="72" cy="50" rx="17" ry="16" fill="#ffffff" fill-opacity="0.2"/><rect x="87" y="37" width="5" height="26" fill="#ffffff" fill-opacity="0.75"/><rect x="86" y="45" width="6" height="3" fill="#f5a3a3" fill-opacity="0.8"/><circle cx="81.5" cy="41.5" r="2" fill="#1d2f4f"/><rect x="79.5" y="44" width="4.5" height="8" fill="#ffffff"/><rect x="80" y="52" width="3.6" height="11" fill="#1d2f4f"/><circle cx="73.5" cy="50.5" r="2" fill="#b8733c"/><rect x="71" y="53" width="5" height="6" fill="#ffffff"/><ellipse cx="73.5" cy="61" rx="5.5" ry="2.2" fill="#1d2f4f"/><text x="8" y="51" font-family="Liberation Sans" font-weight="700" font-size="10.5" textLength="34" lengthAdjust="spacingAndGlyphs" fill="#fff">BOOST</text><rect x="8" y="54" width="34" height="0.8" fill="#ffffff" fill-opacity="0.55"/></g></svg>
<div class="t" style="left:825.00px;top:866.15px;font-size:33.4px;line-height:33.4px;color:#2f4ba8;font-weight:400;">User demo User</div>
<div class="t" style="left:825.00px;top:902.89px;font-size:27.8px;line-height:27.8px;color:#212121;font-weight:400;letter-spacing:0.7px;">superadmin</div>
<div class="t" style="left:1125.50px;top:883.95px;font-size:33.4px;line-height:33.4px;color:#2f4ba8;font-weight:400;">Plan preventivo Covid-19</div>
<div class="t" style="left:1125.50px;top:920.99px;font-size:27.8px;line-height:27.8px;color:#212121;font-weight:400;letter-spacing:0.6px;">1 hrs.</div>
<div class="t" style="left:1533.00px;top:883.85px;font-size:33.4px;line-height:33.4px;color:#2f4ba8;font-weight:400;">Boost</div>
<div class="t" style="left:1534.00px;top:920.39px;font-size:27.8px;line-height:27.8px;color:#212121;font-weight:400;letter-spacing:0.55px;">E-Learning</div>
<svg class="ic" style="left:1772.93px;top:891.80px;" width="50" height="50" viewBox="0 0 24 24"><path d="M9 16.17L4.83 12l-1.42 1.41L9 19 21 7l-1.41-1.41z" fill="#67c04e" stroke="#67c04e" stroke-width="0.3"/></svg>
<svg class="ic" style="left:2012.73px;top:891.80px;" width="50" height="50" viewBox="0 0 24 24"><path d="M9 16.17L4.83 12l-1.42 1.41L9 19 21 7l-1.41-1.41z" fill="#67c04e" stroke="#67c04e" stroke-width="0.3"/></svg>
<svg class="ic" style="left:2252.58px;top:891.80px;" width="50" height="50" viewBox="0 0 24 24"><path d="M9 16.17L4.83 12l-1.42 1.41L9 19 21 7l-1.41-1.41z" fill="#67c04e" stroke="#67c04e" stroke-width="0.3"/></svg>
<svg class="ic" style="left:2788.90px;top:893.02px;" width="48" height="48" viewBox="0 0 24 24"><path d="M3 17.25V21h3.75L17.81 9.94l-3.75-3.75L3 17.25zM20.71 7.04c.39-.39.39-1.02 0-1.41l-2.34-2.34c-.39-.39-1.02-.39-1.41 0l-1.83 1.83 3.75 3.75 1.83-1.83z" fill="#2f4ba8" /></svg>
<svg class="ic" style="left:2871.00px;top:893.02px;" width="48" height="48" viewBox="0 0 24 24"><path d="M6 19c0 1.1.9 2 2 2h8c1.1 0 2-.9 2-2V7H6v12zM19 4h-3.5l-1-1h-5l-1 1H5v2h14V4z" fill="#ff7a6d" /></svg>
<div class="abs" style="left:596px;top:1116.75px;width:2361.5px;height:2px;background:#e4e6ea"></div>
<div class="abs" style="left:612px;top:1029.45px;width:40px;height:40px;box-sizing:border-box;border:2px solid #bdbec0;border-radius:8px;background:transparent"></div>
<svg class="ic" style="left:692.00px;top:1001.25px;" width="100" height="100" viewBox="0 0 100 100"><defs><linearGradient id="g3" x1="0.1" y1="0.9" x2="0.9" y2="0.1"><stop offset="0" stop-color="#7ed87b"/><stop offset="1" stop-color="#41bdb0"/></linearGradient><clipPath id="c3"><rect x="0" y="0" width="91" height="100"/></clipPath></defs><circle cx="50" cy="50" r="50" fill="#ffffff"/><g clip-path="url(#c3)"><circle cx="48" cy="48" r="43" fill="url(#g3)"/><ellipse cx="72" cy="50" rx="17" ry="16" fill="#ffffff" fill-opacity="0.2"/><rect x="87" y="37" width="5" height="26" fill="#ffffff" fill-opacity="0.75"/><rect x="86" y="45" width="6" height="3" fill="#f5a3a3" fill-opacity="0.8"/><circle cx="81.5" cy="41.5" r="2" fill="#1d2f4f"/><rect x="79.5" y="44" width="4.5" height="8" fill="#ffffff"/><rect x="80" y="52" width="3.6" height="11" fill="#1d2f4f"/><circle cx="73.5" cy="50.5" r="2" fill="#b8733c"/><rect x="71" y="53" width="5" height="6" fill="#ffffff"/><ellipse cx="73.5" cy="61" rx="5.5" ry="2.2" fill="#1d2f4f"/><text x="8" y="51" font-family="Liberation Sans" font-weight="700" font-size="10.5" textLength="34" lengthAdjust="spacingAndGlyphs" fill="#fff">BOOST</text><rect x="8" y="54" width="34" height="0.8" fill="#ffffff" fill-opacity="0.55"/></g></svg>
<div class="t" style="left:825.00px;top:1000.28px;font-size:33.4px;line-height:33.4px;color:#2f4ba8;font-weight:400;">User demo User</div>
<div class="t" style="left:825.00px;top:1037.02px;font-size:27.8px;line-height:27.8px;color:#212121;font-weight:400;letter-spacing:0.7px;">superadmin</div>
<div class="t" style="left:1125.50px;top:1018.08px;font-size:33.4px;line-height:33.4px;color:#2f4ba8;font-weight:400;">Curso dani</div>
<div class="t" style="left:1125.50px;top:1055.12px;font-size:27.8px;line-height:27.8px;color:#212121;font-weight:400;letter-spacing:0.6px;">3 hrs.</div>
<div class="t" style="left:1533.00px;top:1017.98px;font-size:33.4px;line-height:33.4px;color:#2f4ba8;font-weight:400;">Boost</div>
<div class="t" style="left:1534.00px;top:1054.52px;font-size:27.8px;line-height:27.8px;color:#212121;font-weight:400;letter-spacing:0.55px;">E-Learning</div>
<svg class="ic" style="left:1772.93px;top:1025.93px;" width="50" height="50" viewBox="0 0 24 24"><path d="M9 16.17L4.83 12l-1.42 1.41L9 19 21 7l-1.41-1.41z" fill="#67c04e" stroke="#67c04e" stroke-width="0.3"/></svg>
<svg class="ic" style="left:2013.15px;top:1025.95px;" width="50" height="50" viewBox="0 0 24 24"><path d="M19 6.41L17.59 5 12 10.59 6.41 5 5 6.41 10.59 12 5 17.59 6.41 19 12 13.41 17.59 19 19 17.59 13.41 12z" fill="#ff7a6d" stroke="#ff7a6d" stroke-width="0.3"/></svg>
<svg class="ic" style="left:2253.00px;top:1025.95px;" width="50" height="50" viewBox="0 0 24 24"><path d="M19 6.41L17.59 5 12 10.59 6.41 5 5 6.41 10.59 12 5 17.59 6.41 19 12 13.41 17.59 19 19 17.59 13.41 12z" fill="#ff7a6d" stroke="#ff7a6d" stroke-width="0.3"/></svg>
<svg class="ic" style="left:2788.90px;top:1027.15px;" width="48" height="48" viewBox="0 0 24 24"><path d="M3 17.25V21h3.75L17.81 9.94l-3.75-3.75L3 17.25zM20.71 7.04c.39-.39.39-1.02 0-1.41l-2.34-2.34c-.39-.39-1.02-.39-1.41 0l-1.83 1.83 3.75 3.75 1.83-1.83z" fill="#2f4ba8" /></svg>
<svg class="ic" style="left:2871.00px;top:1027.15px;" width="48" height="48" viewBox="0 0 24 24"><path d="M6 19c0 1.1.9 2 2 2h8c1.1 0 2-.9 2-2V7H6v12zM19 4h-3.5l-1-1h-5l-1 1H5v2h14V4z" fill="#ff7a6d" /></svg>
<div class="abs" style="left:596px;top:1250.75px;width:2361.5px;height:2px;background:#e4e6ea"></div>
<div class="abs" style="left:612px;top:1163.45px;width:40px;height:40px;box-sizing:border-box;border:2px solid #bdbec0;border-radius:8px;background:transparent"></div>
<svg class="ic" style="left:692.00px;top:1135.25px;" width="100" height="100" viewBox="0 0 100 100"><defs><linearGradient id="g4" x1="0.1" y1="0.9" x2="0.9" y2="0.1"><stop offset="0" stop-color="#7ed87b"/><stop offset="1" stop-color="#41bdb0"/></linearGradient><clipPath id="c4"><rect x="0" y="0" width="91" height="100"/></clipPath></defs><circle cx="50" cy="50" r="50" fill="#ffffff"/><g clip-path="url(#c4)"><circle cx="48" cy="48" r="43" fill="url(#g4)"/><ellipse cx="72" cy="50" rx="17" ry="16" fill="#ffffff" fill-opacity="0.2"/><rect x="87" y="37" width="5" height="26" fill="#ffffff" fill-opacity="0.75"/><rect x="86" y="45" width="6" height="3" fill="#f5a3a3" fill-opacity="0.8"/><circle cx="81.5" cy="41.5" r="2" fill="#1d2f4f"/><rect x="79.5" y="44" width="4.5" height="8" fill="#ffffff"/><rect x="80" y="52" width="3.6" height="11" fill="#1d2f4f"/><circle cx="73.5" cy="50.5" r="2" fill="#b8733c"/><rect x="71" y="53" width="5" height="6" fill="#ffffff"/><ellipse cx="73.5" cy="61" rx="5.5" ry="2.2" fill="#1d2f4f"/><text x="8" y="51" font-family="Liberation Sans" font-weight="700" font-size="10.5" textLength="34" lengthAdjust="spacingAndGlyphs" fill="#fff">BOOST</text><rect x="8" y="54" width="34" height="0.8" fill="#ffffff" fill-opacity="0.55"/></g></svg>
<div class="t" style="left:825.00px;top:1134.28px;font-size:33.4px;line-height:33.4px;color:#2f4ba8;font-weight:400;">User demo User</div>
<div class="t" style="left:825.00px;top:1171.02px;font-size:27.8px;line-height:27.8px;color:#212121;font-weight:400;letter-spacing:0.7px;">superadmin</div>
<div class="t" style="left:1125.50px;top:1152.08px;font-size:33.4px;line-height:33.4px;color:#2f4ba8;font-weight:400;">Capacitación Inducción</div>
<div class="t" style="left:1125.50px;top:1189.12px;font-size:27.8px;line-height:27.8px;color:#212121;font-weight:400;letter-spacing:0.6px;">2 hrs.</div>
<div class="t" style="left:1533.00px;top:1151.98px;font-size:33.4px;line-height:33.4px;color:#2f4ba8;font-weight:400;">Boost</div>
<div class="t" style="left:1534.00px;top:1188.52px;font-size:27.8px;line-height:27.8px;color:#212121;font-weight:400;letter-spacing:0.55px;">A distancia</div>
<svg class="ic" style="left:1772.93px;top:1159.93px;" width="50" height="50" viewBox="0 0 24 24"><path d="M9 16.17L4.83 12l-1.42 1.41L9 19 21 7l-1.41-1.41z" fill="#67c04e" stroke="#67c04e" stroke-width="0.3"/></svg>
<svg class="ic" style="left:2013.15px;top:1159.95px;" width="50" height="50" viewBox="0 0 24 24"><path d="M19 6.41L17.59 5 12 10.59 6.41 5 5 6.41 10.59 12 5 17.59 6.41 19 12 13.41 17.59 19 19 17.59 13.41 12z" fill="#ff7a6d" stroke="#ff7a6d" stroke-width="0.3"/></svg>
<svg class="ic" style="left:2253.00px;top:1159.95px;" width="50" height="50" viewBox="0 0 24 24"><path d="M19 6.41L17.59 5 12 10.59 6.41 5 5 6.41 10.59 12 5 17.59 6.41 19 12 13.41 17.59 19 19 17.59 13.41 12z" fill="#ff7a6d" stroke="#ff7a6d" stroke-width="0.3"/></svg>
<svg class="ic" style="left:2788.90px;top:1161.15px;" width="48" height="48" viewBox="0 0 24 24"><path d="M3 17.25V21h3.75L17.81 9.94l-3.75-3.75L3 17.25zM20.71 7.04c.39-.39.39-1.02 0-1.41l-2.34-2.34c-.39-.39-1.02-.39-1.41 0l-1.83 1.83 3.75 3.75 1.83-1.83z" fill="#2f4ba8" /></svg>
<svg class="ic" style="left:2871.00px;top:1161.15px;" width="48" height="48" viewBox="0 0 24 24"><path d="M6 19c0 1.1.9 2 2 2h8c1.1 0 2-.9 2-2V7H6v12zM19 4h-3.5l-1-1h-5l-1 1H5v2h14V4z" fill="#ff7a6d" /></svg>
<div class="abs" style="left:596px;top:1384.75px;width:2361.5px;height:2px;background:#e4e6ea"></div>
<div class="abs" style="left:612px;top:1297.45px;width:40px;height:40px;box-sizing:border-box;border:2px solid #bdbec0;border-radius:8px;background:transparent"></div>
<svg class="ic" style="left:692.00px;top:1269.25px;" width="100" height="100" viewBox="0 0 100 100"><defs><linearGradient id="g5" x1="0.1" y1="0.9" x2="0.9" y2="0.1"><stop offset="0" stop-color="#7ed87b"/><stop offset="1" stop-color="#41bdb0"/></linearGradient><clipPath id="c5"><rect x="0" y="0" width="91" height="100"/></clipPath></defs><circle cx="50" cy="50" r="50" fill="#ffffff"/><g clip-path="url(#c5)"><circle cx="48" cy="48" r="43" fill="url(#g5)"/><ellipse cx="72" cy="50" rx="17" ry="16" fill="#ffffff" fill-opacity="0.2"/><rect x="87" y="37" width="5" height="26" fill="#ffffff" fill-opacity="0.75"/><rect x="86" y="45" width="6" height="3" fill="#f5a3a3" fill-opacity="0.8"/><circle cx="81.5" cy="41.5" r="2" fill="#1d2f4f"/><rect x="79.5" y="44" width="4.5" height="8" fill="#ffffff"/><rect x="80" y="52" width="3.6" height="11" fill="#1d2f4f"/><circle cx="73.5" cy="50.5" r="2" fill="#b8733c"/><rect x="71" y="53" width="5" height="6" fill="#ffffff"/><ellipse cx="73.5" cy="61" rx="5.5" ry="2.2" fill="#1d2f4f"/><text x="8" y="51" font-family="Liberation Sans" font-weight="700" font-size="10.5" textLength="34" lengthAdjust="spacingAndGlyphs" fill="#fff">BOOST</text><rect x="8" y="54" width="34" height="0.8" fill="#ffffff" fill-opacity="0.55"/></g></svg>
<div class="t" style="left:825.00px;top:1268.28px;font-size:33.4px;line-height:33.4px;color:#2f4ba8;font-weight:400;">User demo User</div>
<div class="t" style="left:825.00px;top:1305.02px;font-size:27.8px;line-height:27.8px;color:#212121;font-weight:400;letter-spacing:0.7px;">superadmin</div>
<div class="t" style="left:1125.50px;top:1286.08px;font-size:33.4px;line-height:33.4px;color:#2f4ba8;font-weight:400;">Ejemplo inducción</div>
<div class="t" style="left:1125.50px;top:1323.12px;font-size:27.8px;line-height:27.8px;color:#212121;font-weight:400;letter-spacing:0.6px;">4 hrs.</div>
<div class="t" style="left:1533.00px;top:1285.98px;font-size:33.4px;line-height:33.4px;color:#2f4ba8;font-weight:400;">prueba</div>
<div class="t" style="left:1534.00px;top:1322.52px;font-size:27.8px;line-height:27.8px;color:#212121;font-weight:400;letter-spacing:0.55px;">E-Learning</div>
<svg class="ic" style="left:1772.93px;top:1293.93px;" width="50" height="50" viewBox="0 0 24 24"><path d="M9 16.17L4.83 12l-1.42 1.41L9 19 21 7l-1.41-1.41z" fill="#67c04e" stroke="#67c04e" stroke-width="0.3"/></svg>
<svg class="ic" style="left:2013.15px;top:1293.95px;" width="50" height="50" viewBox="0 0 24 24"><path d="M19 6.41L17.59 5 12 10.59 6.41 5 5 6.41 10.59 12 5 17.59 6.41 19 12 13.41 17.59 19 19 17.59 13.41 12z" fill="#ff7a6d" stroke="#ff7a6d" stroke-width="0.3"/></svg>
<svg class="ic" style="left:2253.00px;top:1293.95px;" width="50" height="50" viewBox="0 0 24 24"><path d="M19 6.41L17.59 5 12 10.59 6.41 5 5 6.41 10.59 12 5 17.59 6.41 19 12 13.41 17.59 19 19 17.59 13.41 12z" fill="#ff7a6d" stroke="#ff7a6d" stroke-width="0.3"/></svg>
<svg class="ic" style="left:2788.90px;top:1295.15px;" width="48" height="48" viewBox="0 0 24 24"><path d="M3 17.25V21h3.75L17.81 9.94l-3.75-3.75L3 17.25zM20.71 7.04c.39-.39.39-1.02 0-1.41l-2.34-2.34c-.39-.39-1.02-.39-1.41 0l-1.83 1.83 3.75 3.75 1.83-1.83z" fill="#2f4ba8" /></svg>
<svg class="ic" style="left:2871.00px;top:1295.15px;" width="48" height="48" viewBox="0 0 24 24"><path d="M6 19c0 1.1.9 2 2 2h8c1.1 0 2-.9 2-2V7H6v12zM19 4h-3.5l-1-1h-5l-1 1H5v2h14V4z" fill="#ff7a6d" /></svg>
<div class="abs" style="left:596px;top:1518.75px;width:2361.5px;height:2px;background:#e4e6ea"></div>
<div class="abs" style="left:612px;top:1431.45px;width:40px;height:40px;box-sizing:border-box;border:2px solid #bdbec0;border-radius:8px;background:transparent"></div>
<svg class="ic" style="left:692.00px;top:1403.25px;" width="100" height="100" viewBox="0 0 100 100"><defs><linearGradient id="g6" x1="0.1" y1="0.9" x2="0.9" y2="0.1"><stop offset="0" stop-color="#7ed87b"/><stop offset="1" stop-color="#41bdb0"/></linearGradient><clipPath id="c6"><rect x="0" y="0" width="91" height="100"/></clipPath></defs><circle cx="50" cy="50" r="50" fill="#ffffff"/><g clip-path="url(#c6)"><circle cx="48" cy="48" r="43" fill="url(#g6)"/><ellipse cx="72" cy="50" rx="17" ry="16" fill="#ffffff" fill-opacity="0.2"/><rect x="87" y="37" width="5" height="26" fill="#ffffff" fill-opacity="0.75"/><rect x="86" y="45" width="6" height="3" fill="#f5a3a3" fill-opacity="0.8"/><circle cx="81.5" cy="41.5" r="2" fill="#1d2f4f"/><rect x="79.5" y="44" width="4.5" height="8" fill="#ffffff"/><rect x="80" y="52" width="3.6" height="11" fill="#1d2f4f"/><circle cx="73.5" cy="50.5" r="2" fill="#b8733c"/><rect x="71" y="53" width="5" height="6" fill="#ffffff"/><ellipse cx="73.5" cy="61" rx="5.5" ry="2.2" fill="#1d2f4f"/><text x="8" y="51" font-family="Liberation Sans" font-weight="700" font-size="10.5" textLength="34" lengthAdjust="spacingAndGlyphs" fill="#fff">BOOST</text><rect x="8" y="54" width="34" height="0.8" fill="#ffffff" fill-opacity="0.55"/></g></svg>
<div class="t" style="left:825.00px;top:1402.28px;font-size:33.4px;line-height:33.4px;color:#2f4ba8;font-weight:400;">User demo User</div>
<div class="t" style="left:825.00px;top:1439.02px;font-size:27.8px;line-height:27.8px;color:#212121;font-weight:400;letter-spacing:0.7px;">superadmin</div>
<div class="t" style="left:1125.50px;top:1420.08px;font-size:33.4px;line-height:33.4px;color:#2f4ba8;font-weight:400;">curso liderazgo</div>
<div class="t" style="left:1125.50px;top:1457.12px;font-size:27.8px;line-height:27.8px;color:#212121;font-weight:400;letter-spacing:0.6px;">12 hrs.</div>
<div class="t" style="left:1533.00px;top:1419.98px;font-size:33.4px;line-height:33.4px;color:#2f4ba8;font-weight:400;">Boost</div>
<div class="t" style="left:1534.00px;top:1456.52px;font-size:27.8px;line-height:27.8px;color:#212121;font-weight:400;letter-spacing:0.55px;">Presencial</div>
<svg class="ic" style="left:1772.93px;top:1427.93px;" width="50" height="50" viewBox="0 0 24 24"><path d="M9 16.17L4.83 12l-1.42 1.41L9 19 21 7l-1.41-1.41z" fill="#67c04e" stroke="#67c04e" stroke-width="0.3"/></svg>
<svg class="ic" style="left:2013.15px;top:1427.95px;" width="50" height="50" viewBox="0 0 24 24"><path d="M19 6.41L17.59 5 12 10.59 6.41 5 5 6.41 10.59 12 5 17.59 6.41 19 12 13.41 17.59 19 19 17.59 13.41 12z" fill="#ff7a6d" stroke="#ff7a6d" stroke-width="0.3"/></svg>
<svg class="ic" style="left:2253.00px;top:1427.95px;" width="50" height="50" viewBox="0 0 24 24"><path d="M19 6.41L17.59 5 12 10.59 6.41 5 5 6.41 10.59 12 5 17.59 6.41 19 12 13.41 17.59 19 19 17.59 13.41 12z" fill="#ff7a6d" stroke="#ff7a6d" stroke-width="0.3"/></svg>
<svg class="ic" style="left:2788.90px;top:1429.15px;" width="48" height="48" viewBox="0 0 24 24"><path d="M3 17.25V21h3.75L17.81 9.94l-3.75-3.75L3 17.25zM20.71 7.04c.39-.39.39-1.02 0-1.41l-2.34-2.34c-.39-.39-1.02-.39-1.41 0l-1.83 1.83 3.75 3.75 1.83-1.83z" fill="#2f4ba8" /></svg>
<svg class="ic" style="left:2871.00px;top:1429.15px;" width="48" height="48" viewBox="0 0 24 24"><path d="M6 19c0 1.1.9 2 2 2h8c1.1 0 2-.9 2-2V7H6v12zM19 4h-3.5l-1-1h-5l-1 1H5v2h14V4z" fill="#ff7a6d" /></svg>
<div class="abs" style="left:596px;top:1653px;width:2361.5px;height:2px;background:#e4e6ea"></div>
<div class="abs" style="left:612px;top:1565.58px;width:40px;height:40px;box-sizing:border-box;border:2px solid #bdbec0;border-radius:8px;background:transparent"></div>
<svg class="ic" style="left:692.00px;top:1537.38px;" width="100" height="100" viewBox="0 0 100 100"><defs><linearGradient id="g7" x1="0.1" y1="0.9" x2="0.9" y2="0.1"><stop offset="0" stop-color="#7ed87b"/><stop offset="1" stop-color="#41bdb0"/></linearGradient><clipPath id="c7"><rect x="0" y="0" width="91" height="100"/></clipPath></defs><circle cx="50" cy="50" r="50" fill="#ffffff"/><g clip-path="url(#c7)"><circle cx="48" cy="48" r="43" fill="url(#g7)"/><ellipse cx="72" cy="50" rx="17" ry="16" fill="#ffffff" fill-opacity="0.2"/><rect x="87" y="37" width="5" height="26" fill="#ffffff" fill-opacity="0.75"/><rect x="86" y="45" width="6" height="3" fill="#f5a3a3" fill-opacity="0.8"/><circle cx="81.5" cy="41.5" r="2" fill="#1d2f4f"/><rect x="79.5" y="44" width="4.5" height="8" fill="#ffffff"/><rect x="80" y="52" width="3.6" height="11" fill="#1d2f4f"/><circle cx="73.5" cy="50.5" r="2" fill="#b8733c"/><rect x="71" y="53" width="5" height="6" fill="#ffffff"/><ellipse cx="73.5" cy="61" rx="5.5" ry="2.2" fill="#1d2f4f"/><text x="8" y="51" font-family="Liberation Sans" font-weight="700" font-size="10.5" textLength="34" lengthAdjust="spacingAndGlyphs" fill="#fff">BOOST</text><rect x="8" y="54" width="34" height="0.8" fill="#ffffff" fill-opacity="0.55"/></g></svg>
<div class="t" style="left:825.00px;top:1536.40px;font-size:33.4px;line-height:33.4px;color:#2f4ba8;font-weight:400;">User demo User</div>
<div class="t" style="left:825.00px;top:1573.14px;font-size:27.8px;line-height:27.8px;color:#212121;font-weight:400;letter-spacing:0.7px;">superadmin</div>
<div class="t" style="left:1125.50px;top:1554.20px;font-size:33.4px;line-height:33.4px;color:#2f4ba8;font-weight:400;">Curso TSP</div>
<div class="t" style="left:1125.50px;top:1591.24px;font-size:27.8px;line-height:27.8px;color:#212121;font-weight:400;letter-spacing:0.6px;">1 hrs.</div>
<div class="t" style="left:1533.00px;top:1554.10px;font-size:33.4px;line-height:33.4px;color:#2f4ba8;font-weight:400;">Boost</div>
<div class="t" style="left:1534.00px;top:1590.64px;font-size:27.8px;line-height:27.8px;color:#212121;font-weight:400;letter-spacing:0.55px;">Presencial</div>
<svg class="ic" style="left:1772.93px;top:1562.05px;" width="50" height="50" viewBox="0 0 24 24"><path d="M9 16.17L4.83 12l-1.42 1.41L9 19 21 7l-1.41-1.41z" fill="#67c04e" stroke="#67c04e" stroke-width="0.3"/></svg>
<svg class="ic" style="left:2012.73px;top:1562.05px;" width="50" height="50" viewBox="0 0 24 24"><path d="M9 16.17L4.83 12l-1.42 1.41L9 19 21 7l-1.41-1.41z" fill="#67c04e" stroke="#67c04e" stroke-width="0.3"/></svg>
<svg class="ic" style="left:2253.00px;top:1562.08px;" width="50" height="50" viewBox="0 0 24 24"><path d="M19 6.41L17.59 5 12 10.59 6.41 5 5 6.41 10.59 12 5 17.59 6.41 19 12 13.41 17.59 19 19 17.59 13.41 12z" fill="#ff7a6d" stroke="#ff7a6d" stroke-width="0.3"/></svg>
<svg class="ic" style="left:2788.90px;top:1563.28px;" width="48" height="48" viewBox="0 0 24 24"><path d="M3 17.25V21h3.75L17.81 9.94l-3.75-3.75L3 17.25zM20.71 7.04c.39-.39.39-1.02 0-1.41l-2.34-2.34c-.39-.39-1.02-.39-1.41 0l-1.83 1.83 3.75 3.75 1.83-1.83z" fill="#2f4ba8" /></svg>
<svg class="ic" style="left:2871.00px;top:1563.28px;" width="48" height="48" viewBox="0 0 24 24"><path d="M6 19c0 1.1.9 2 2 2h8c1.1 0 2-.9 2-2V7H6v12zM19 4h-3.5l-1-1h-5l-1 1H5v2h14V4z" fill="#ff7a6d" /></svg>
</div>
</body></html>
